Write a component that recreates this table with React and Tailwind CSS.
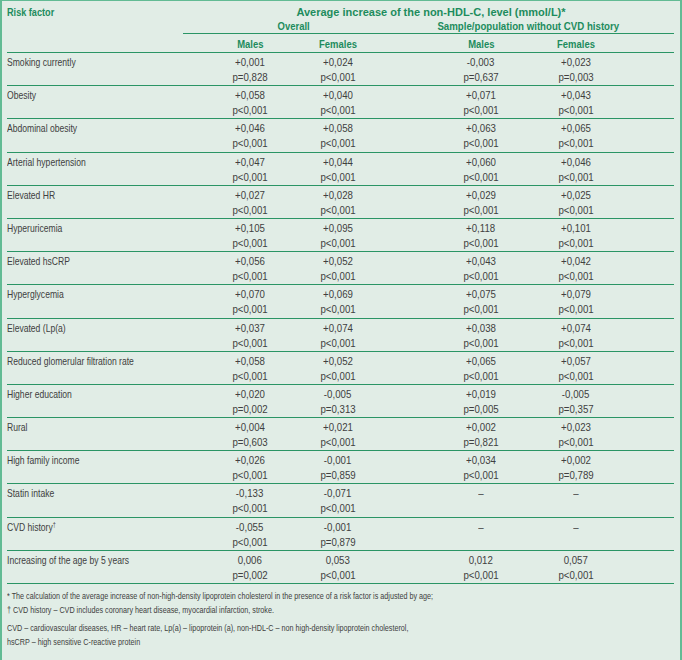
const rows = [
  ['Smoking currently', '+0,001', 'p=0,828', '+0,024', 'p<0,001', '-0,003', 'p=0,637', '+0,023', 'p=0,003'],
  ['Obesity', '+0,058', 'p<0,001', '+0,040', 'p<0,001', '+0,071', 'p<0,001', '+0,043', 'p<0,001'],
  ['Abdominal obesity', '+0,046', 'p<0,001', '+0,058', 'p<0,001', '+0,063', 'p<0,001', '+0,065', 'p<0,001'],
  ['Arterial hypertension', '+0,047', 'p<0,001', '+0,044', 'p<0,001', '+0,060', 'p<0,001', '+0,046', 'p<0,001'],
  ['Elevated HR', '+0,027', 'p<0,001', '+0,028', 'p<0,001', '+0,029', 'p<0,001', '+0,025', 'p<0,001'],
  ['Hyperuricemia', '+0,105', 'p<0,001', '+0,095', 'p<0,001', '+0,118', 'p<0,001', '+0,101', 'p<0,001'],
  ['Elevated hsCRP', '+0,056', 'p<0,001', '+0,052', 'p<0,001', '+0,043', 'p<0,001', '+0,042', 'p<0,001'],
  ['Hyperglycemia', '+0,070', 'p<0,001', '+0,069', 'p<0,001', '+0,075', 'p<0,001', '+0,079', 'p<0,001'],
  ['Elevated (Lp(a)', '+0,037', 'p<0,001', '+0,074', 'p<0,001', '+0,038', 'p<0,001', '+0,074', 'p<0,001'],
  ['Reduced glomerular filtration rate', '+0,058', 'p<0,001', '+0,052', 'p<0,001', '+0,065', 'p<0,001', '+0,057', 'p<0,001'],
  ['Higher education', '+0,020', 'p=0,002', '-0,005', 'p=0,313', '+0,019', 'p=0,005', '-0,005', 'p=0,357'],
  ['Rural', '+0,004', 'p=0,603', '+0,021', 'p<0,001', '+0,002', 'p=0,821', '+0,023', 'p<0,001'],
  ['High family income', '+0,026', 'p<0,001', '-0,001', 'p=0,859', '+0,034', 'p<0,001', '+0,002', 'p=0,789'],
  ['Statin intake', '-0,133', 'p<0,001', '-0,071', 'p<0,001', '–', '', '–', ''],
  ['CVD history', '-0,055', 'p<0,001', '-0,001', 'p=0,879', '–', '', '–', '', true],
  ['Increasing of the age by 5 years', '0,006', 'p=0,002', '0,053', 'p<0,001', '0,012', 'p<0,001', '0,057', 'p<0,001'],
]

const grid = 'grid grid-cols-[199px_88px_88px_52px_94px_96px_1fr]'

// source font is a condensed face; squeeze Liberation Sans to the same widths
function Sq({ children, className = 'scale-x-[0.86]' }) {
  return <span className={`inline-block whitespace-nowrap ${className}`}>{children}</span>
}

function Cell({ top, bottom, className = '' }) {
  return (
    <div className={`flex flex-col items-center ${className}`}>
      <span className="h-[15px] leading-[15px]">
        <Sq className="scale-x-[0.88]">{top}</Sq>
      </span>
      <span className="h-[15px] leading-[15px]">
        <Sq className="scale-x-[0.88]">{bottom}</Sq>
      </span>
    </div>
  )
}

export default function App() {
  return (
    <div
      className="h-[660px] w-[682px] overflow-hidden border-t border-r-2 border-l-2 border-[#62bb94] bg-[#e1ede6] pr-[6px] pl-[5px] text-[11px] text-[#404040]"
      style={{ fontFamily: '"Liberation Sans", Arial, sans-serif' }}
    >
      {/* header */}
      <div className={`${grid} font-bold text-[#1d8c5d]`}>
        <div className="col-start-1 row-start-1 pt-[4px] leading-[15px]">
          <Sq className="origin-left scale-x-[0.83]">Risk factor</Sq>
        </div>
        <div className="col-span-6 col-start-2 row-start-1 pt-[4px] pr-[48px] pl-[30px] text-center leading-[15px]">
          Average increase of the non-HDL-C, level (mmol/L)*
        </div>
        <div className="col-span-2 col-start-2 row-start-2 text-center leading-[13px]">
          <Sq>Overall</Sq>
        </div>
        <div className="col-span-4 col-start-4 row-start-2 text-center leading-[13px]">
          <Sq className="scale-x-[0.88]">Sample/population without CVD history</Sq>
        </div>
        <div className="col-span-6 col-start-2 row-start-3 ml-[-23px] h-px bg-[#2a9565]" />
        <div className="col-start-2 row-start-4 pt-[4px] pb-[2px] text-center leading-[12px]">
          <Sq>Males</Sq>
        </div>
        <div className="col-start-3 row-start-4 pt-[4px] pb-[2px] text-center leading-[12px]">
          <Sq>Females</Sq>
        </div>
        <div className="col-start-5 row-start-4 pt-[4px] pb-[2px] text-center leading-[12px]">
          <Sq>Males</Sq>
        </div>
        <div className="col-start-6 row-start-4 pt-[4px] pb-[2px] text-center leading-[12px]">
          <Sq>Females</Sq>
        </div>
      </div>

      {rows.map((r) => (
        <div key={r[0]} className={`${grid} border-t border-[#2a9565] pt-[2px] pb-[0.2px]`}>
          <div className="leading-[15px]">
            <Sq className="origin-left scale-x-[0.78]">
              {r[0]}
              {r[9] ? <sup className="text-[7px]">†</sup> : null}
            </Sq>
          </div>
          <Cell top={r[1]} bottom={r[2]} />
          <Cell top={r[3]} bottom={r[4]} />
          <Cell top={r[5]} bottom={r[6]} className="col-start-5" />
          <Cell top={r[7]} bottom={r[8]} />
        </div>
      ))}

      {/* footnotes */}
      <div className="border-t border-[#2a9565] pt-[5px] text-[9px] leading-[14px] text-[#404040]">
        <p>
          <Sq className="origin-left scale-x-[0.8]">
            * The calculation of the average increase of non-high-density lipoprotein cholesterol in the presence of a risk factor is adjusted by age;
          </Sq>
        </p>
        <p>
          <Sq className="origin-left scale-x-[0.8]">
            † CVD history – CVD includes coronary heart disease, myocardial infarction,  stroke.
          </Sq>
        </p>
        <p className="mt-[4px]">
          <Sq className="origin-left scale-x-[0.8]">
            CVD – cardiovascular diseases, HR – heart rate, Lp(a) – lipoprotein (a), non-HDL-C – non high-density lipoprotein cholesterol,
          </Sq>
        </p>
        <p>
          <Sq className="origin-left scale-x-[0.8]">hsCRP – high sensitive C-reactive protein</Sq>
        </p>
      </div>
    </div>
  )
}
